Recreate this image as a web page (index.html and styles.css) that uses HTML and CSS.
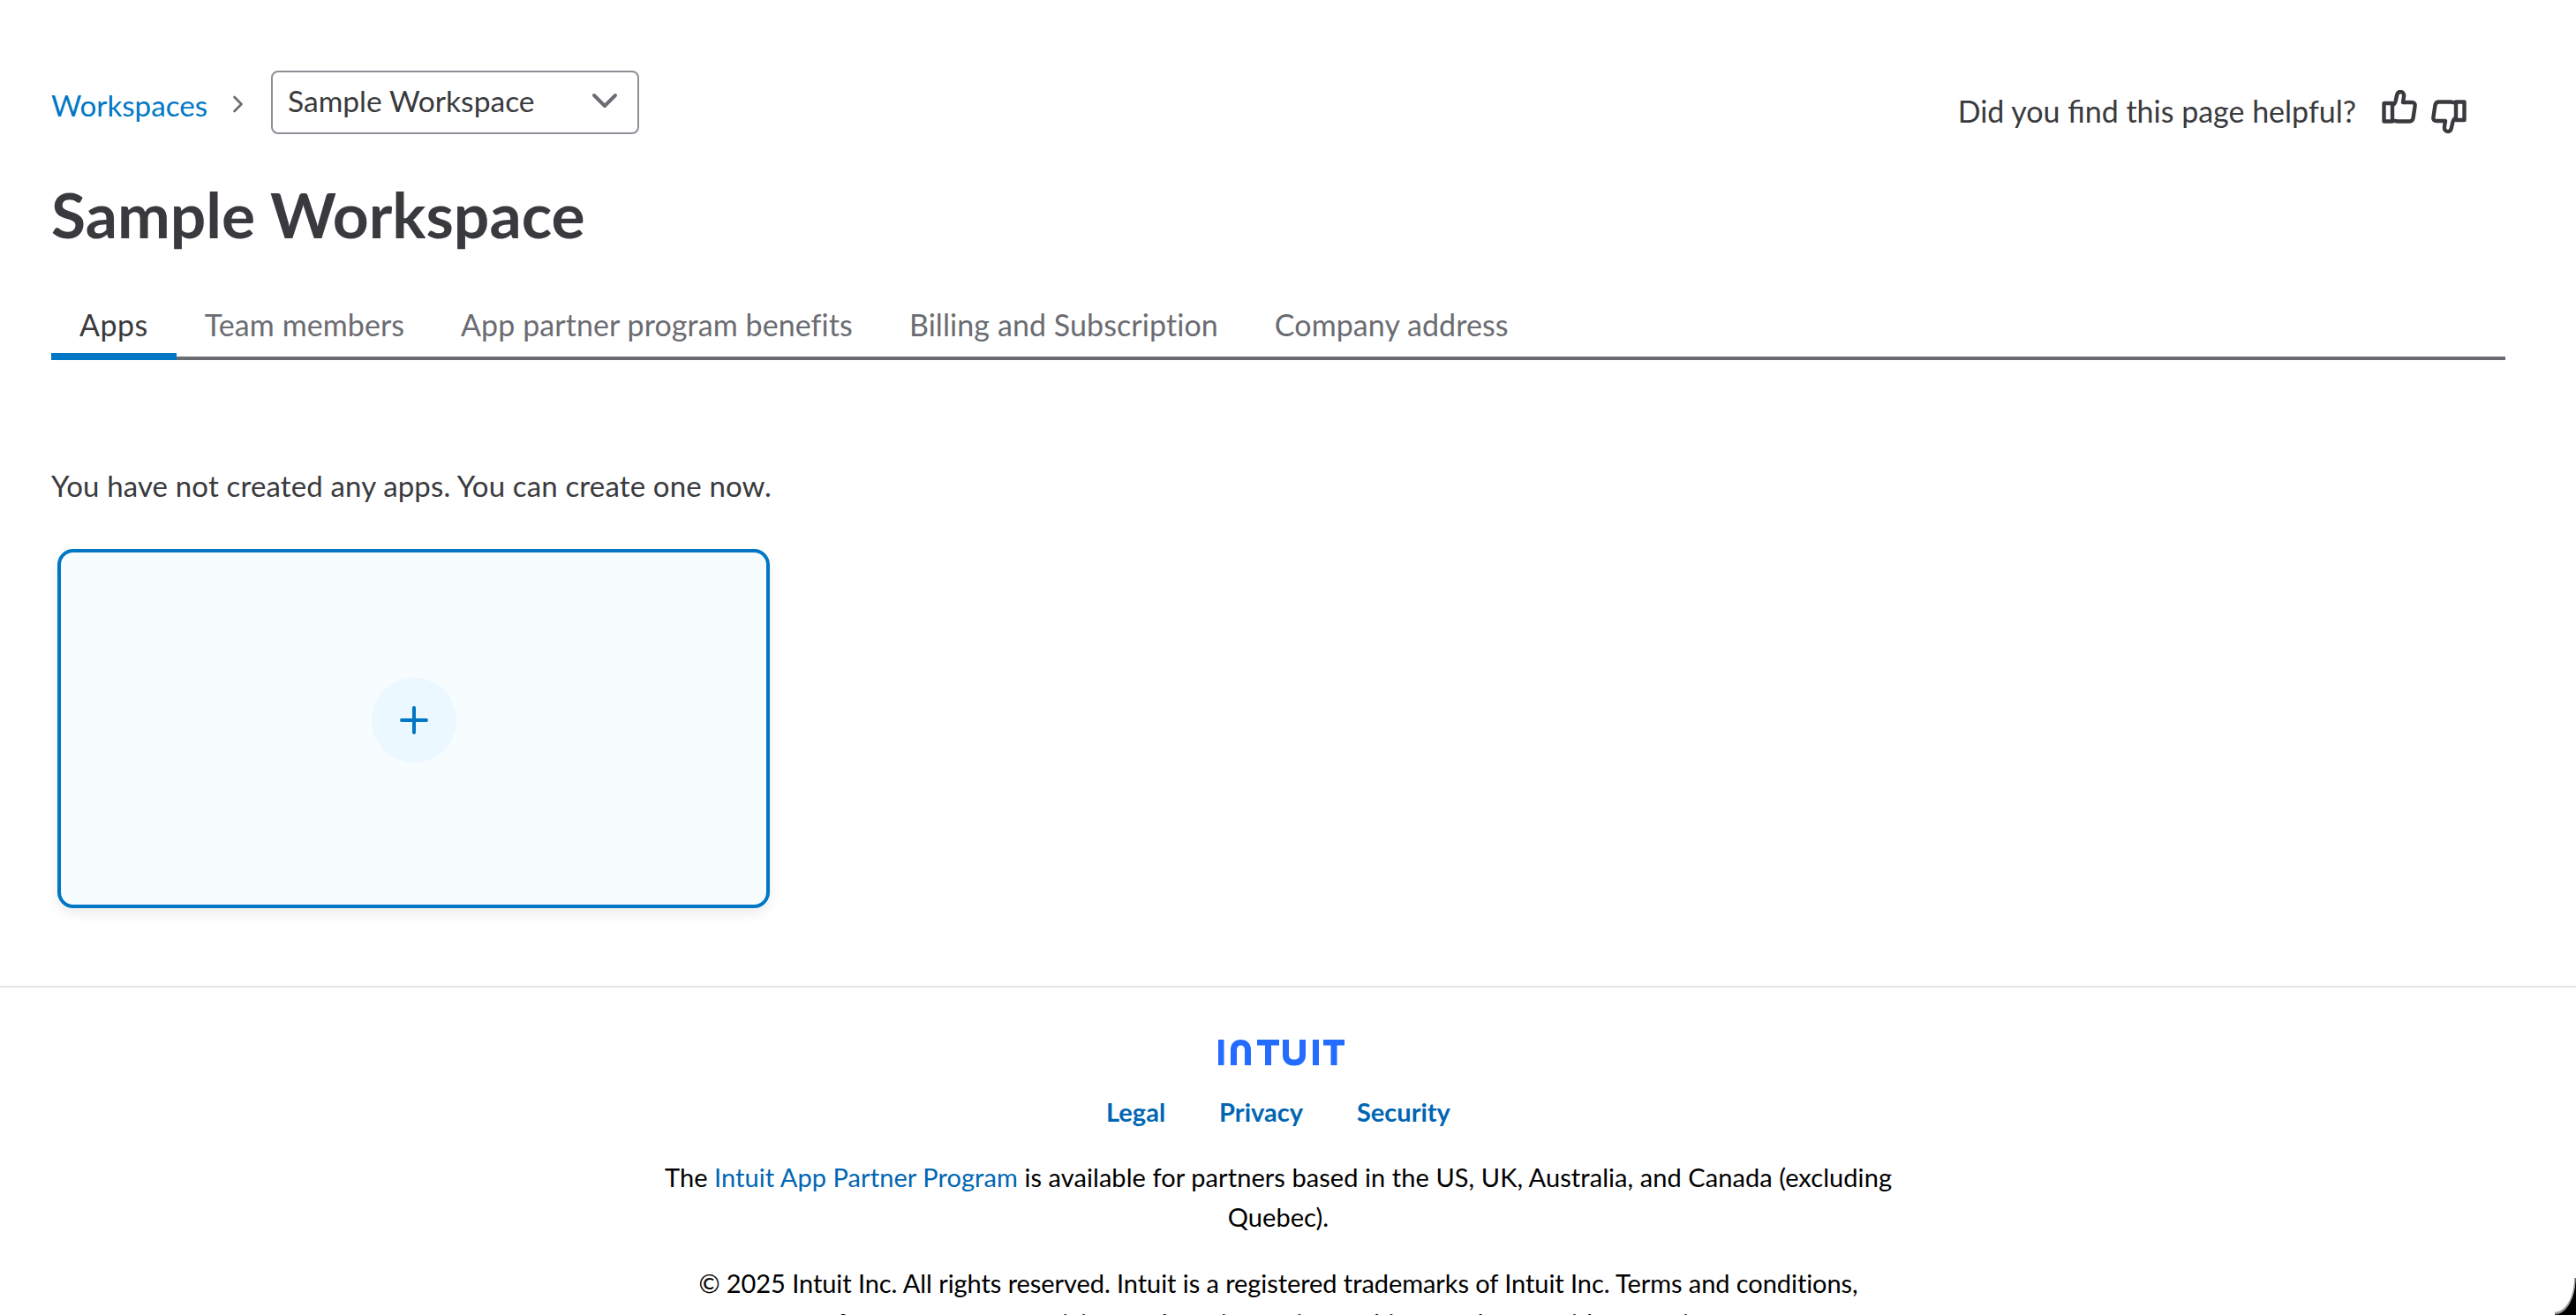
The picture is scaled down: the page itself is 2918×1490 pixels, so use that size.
FILE: index.html
```html
<!DOCTYPE html>
<html lang="en">
<head>
<meta charset="utf-8">
<title>Sample Workspace</title>
<link rel="stylesheet" href="styles.css">
</head>
<body>
<main class="page">
  <section class="content">
    <header class="top">
      <nav class="crumbs">
        <a class="crumb-link">Workspaces</a>
        <svg class="crumb-sep" viewBox="0 0 14 24" width="14" height="24"><path d="M2.5 4l8 8-8 8" fill="none" stroke="#6b6c72" stroke-width="2.6" stroke-linecap="round" stroke-linejoin="round"/></svg>
        <div class="select">
          <span class="select-label">Sample Workspace</span>
          <svg class="select-caret" viewBox="0 0 30 20" width="30" height="20"><path d="M3 4l12 12L27 4" fill="none" stroke="#6b6c72" stroke-width="4" stroke-linecap="round" stroke-linejoin="round"/></svg>
        </div>
      </nav>
      <div class="helpful">
        <span class="helpful-label">Did you find this page helpful?</span>
        <svg class="thumb-up" viewBox="0 0 40 40" width="40" height="40"><path d="M2.500 15h9.500v20.500H2.500zM12 17.500c2-1 3-2.500 3.700-5L17 6.500C17.500 3.500 19 2 21 2c3 0 4.500 2.500 4 5.500L24 14h10c2.500 0 4 1.500 3.600 4l-2 13.500c-.4 2.500-2 4-4.300 4H18c-2.500 0-4-1-6-1" fill="none" stroke="#393a3d" stroke-width="4.400" stroke-linejoin="round" stroke-linecap="round"/></svg>
        <svg class="thumb-down" viewBox="0 0 40 40" width="40" height="40"><g transform="rotate(180 20 19.500)"><path d="M2.500 15h9.500v20.500H2.500zM12 17.500c2-1 3-2.500 3.700-5L17 6.500C17.500 3.500 19 2 21 2c3 0 4.500 2.500 4 5.500L24 14h10c2.500 0 4 1.500 3.600 4l-2 13.500c-.4 2.500-2 4-4.300 4H18c-2.500 0-4-1-6-1" fill="none" stroke="#393a3d" stroke-width="4.400" stroke-linejoin="round" stroke-linecap="round"/></g></svg>
      </div>
    </header>
    <h1 class="title">Sample Workspace</h1>
    <div class="tabs">
      <a class="tab tab-active">Apps</a>
      <a class="tab">Team members</a>
      <a class="tab">App partner program benefits</a>
      <a class="tab">Billing and Subscription</a>
      <a class="tab">Company address</a>
    </div>
    <p class="empty">You have not created any apps. You can create one now.</p>
    <div class="card">
      <div class="card-circle">
        <svg viewBox="0 0 32 32" width="32" height="32"><path d="M16 2v28M2 16h28" fill="none" stroke="#0077c5" stroke-width="4" stroke-linecap="round"/></svg>
      </div>
    </div>
  </section>
  <footer class="footer">
    <svg class="logo" viewBox="0 0 143 29.500" width="143" height="29.500" role="img" aria-label="Intuit">
      <path fill="#236cff" d="M0 0h6.500v29H0zM14 29V11.500C14 4.500 18.500 0 25.500 0S37 4.500 37 11.500V29h-7V11.500c0-3-1.500-5-4.500-5S21 8.500 21 11.500V29zM44 0h25v6.500H60V29h-7V6.500h-9zM73 0h7v17.500c0 3 2 5 6 5s6-2 6-5V0h7v17.500C99 25 94 29.500 86 29.500S73 25 73 17.500zM107 0h7v29h-7zM119 0h24v6.500h-8.500V29h-7V6.500H119z"/>
    </svg>
    <nav class="footer-links">
      <a class="footer-link">Legal</a>
      <a class="footer-link">Privacy</a>
      <a class="footer-link">Security</a>
    </nav>
    <p class="legal legal-program">The <a class="legal-link">Intuit App Partner Program</a> is available for partners based in the US, UK, Australia, and Canada (excluding Quebec).</p>
    <p class="legal legal-copyright">© 2025 Intuit Inc. All rights reserved. Intuit is a registered trademarks of Intuit Inc. Terms and conditions, features, support, pricing, and service options subject to change without notice.</p>
  </footer>
</main>
<div class="window-corner"></div>
</body>
</html>
```
FILE: styles.css
```css
* { box-sizing: border-box; }
html, body { margin: 0; height: 100%; overflow: hidden; background: #fff; }
body { font-family: "Lato", "Liberation Sans", sans-serif; color: #393a3d; }
.page { height: 1490px; overflow: hidden; }
.content { padding: 80px 80px 0 58px; height: 1117px; }
.top { display: flex; justify-content: space-between; align-items: flex-start; }
.crumbs { display: flex; align-items: center; height: 72px; }
.crumb-link { color: #0077c5; font-size: 33.200px; width: 178px; position: relative; top: 3px; }
.crumb-sep { margin: 3px 30px 0 27px; }
.select { width: 417px; height: 72px; border: 2px solid #8d9096; border-radius: 8px; display: flex; align-items: center; justify-content: space-between; padding: 0 22px 4px 17px; }
.select-label { font-size: 33.600px; color: #393a3d; }
.helpful { display: flex; align-items: flex-start; margin: 22px 44px 0 0; }
.helpful-label { font-size: 34px; line-height: 40px; margin: 4px 29px 0 0; }
.thumb-up { margin-right: 16px; }
.thumb-down { margin-top: 10px; }
.title { margin: 46px 0 0; font-size: 71.400px; line-height: 90px; font-weight: 700; color: #393a3d; }
.tabs { display: flex; margin-top: 56px; border-bottom: 4px solid #6b6c72; height: 64px; }
.tab { padding: 0 32px; font-size: 34px; letter-spacing: .08px; line-height: 48px; color: #6b6c72; height: 64px; }
.tab-active { color: #393a3d; letter-spacing: .5px; border-bottom: 8px solid #0077c5; margin-bottom: -4px; }
.empty { margin: 120px 0 0; font-size: 33px; letter-spacing: .15px; line-height: 44px; }
.card { width: 807px; height: 407px; margin-top: 50px; margin-left: 7px; border: 4px solid #0077c5; border-radius: 18px; background: #f7fcff; box-shadow: 0 6px 14px rgba(0,0,0,.08); display: flex; align-items: center; justify-content: center; padding-bottom: 19px; }
.card-circle { width: 96px; height: 96px; border-radius: 50%; background: #ebf8ff; display: flex; align-items: center; justify-content: center; }
.card-circle svg { display: block; }
.footer { border-top: 2px solid #e4e6e8; padding: 59px 22px 0 0; display: flex; flex-direction: column; align-items: center; }
.logo { display: block; margin-left: 7px; }
.footer-links { display: flex; gap: 61px; margin-top: 32px; }
.footer-link { color: #0066b3; font-size: 29px; font-weight: 700; line-height: 40px; }
.legal { margin: 0; width: 1400px; text-align: center; font-size: 29px; line-height: 45px; color: #000; }
.legal-program { margin-top: 31px; letter-spacing: .07px; }
.legal-copyright { margin-top: 30px; letter-spacing: -.07px; }
.legal-link { color: #0066b3; }
.window-corner { position: absolute; right: 0; bottom: 0; width: 24px; height: 42px; background: radial-gradient(ellipse 24px 42px at 0 0, transparent 90%, #999 94%, #999 97%, #000 100%); }
```
